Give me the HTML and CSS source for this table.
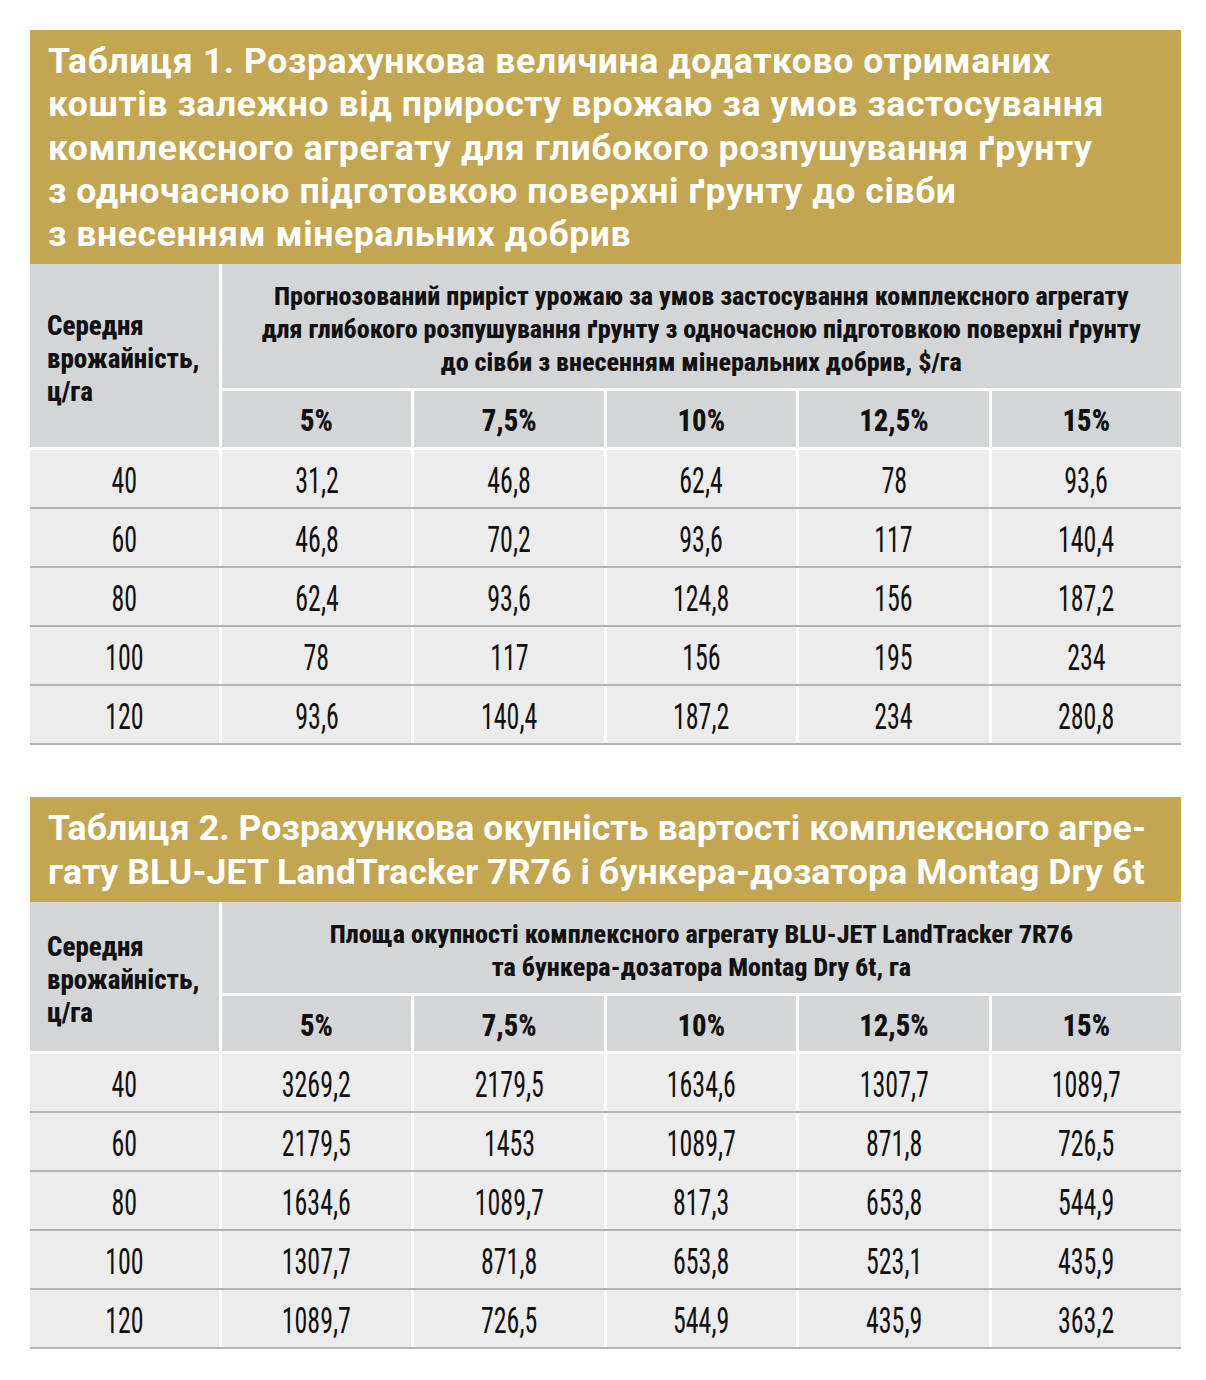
FILE: index.html
```html
<!DOCTYPE html>
<html lang="uk">
<head>
  <meta charset="UTF-8" />
  <title>Таблиці окупності</title>
  <link rel="stylesheet" href="styles.css">
</head>
<body>
  <section class="tbl">
    <h2 class="tbl-title">Таблиця 1. Розрахункова величина додатково отриманих<br>коштів залежно від приросту врожаю за умов застосування<br>комплексного агрегату для глибокого розпушування ґрунту<br>з одночасною підготовкою поверхні ґрунту до сівби<br>з внесенням мінеральних добрив</h2>
    <div class="tbl-head tall">
      <div class="h-side"><span>Середня<br>врожайність,<br>ц/га</span></div>
      <div class="h-main"><span>Прогнозований приріст урожаю за умов застосування комплексного агрегату<br>для глибокого розпушування ґрунту з одночасною підготовкою поверхні ґрунту<br>до сівби з внесенням мінеральних добрив, $/га</span></div>
      <div class="h-pct"><span>5%</span></div>
      <div class="h-pct"><span>7,5%</span></div>
      <div class="h-pct"><span>10%</span></div>
      <div class="h-pct"><span>12,5%</span></div>
      <div class="h-pct"><span>15%</span></div>
    </div>
    <div class="row"><div><span>40</span></div><div><span>31,2</span></div><div><span>46,8</span></div><div><span>62,4</span></div><div><span>78</span></div><div><span>93,6</span></div></div>
    <div class="row"><div><span>60</span></div><div><span>46,8</span></div><div><span>70,2</span></div><div><span>93,6</span></div><div><span>117</span></div><div><span>140,4</span></div></div>
    <div class="row"><div><span>80</span></div><div><span>62,4</span></div><div><span>93,6</span></div><div><span>124,8</span></div><div><span>156</span></div><div><span>187,2</span></div></div>
    <div class="row"><div><span>100</span></div><div><span>78</span></div><div><span>117</span></div><div><span>156</span></div><div><span>195</span></div><div><span>234</span></div></div>
    <div class="row"><div><span>120</span></div><div><span>93,6</span></div><div><span>140,4</span></div><div><span>187,2</span></div><div><span>234</span></div><div><span>280,8</span></div></div>
  </section>

  <section class="tbl">
    <h2 class="tbl-title tight">Таблиця 2. Розрахункова окупність вартості комплексного агре-<br>гату BLU-JET LandTracker 7R76 і бункера-дозатора Montag Dry 6t</h2>
    <div class="tbl-head">
      <div class="h-side"><span>Середня<br>врожайність,<br>ц/га</span></div>
      <div class="h-main"><span>Площа окупності комплексного агрегату BLU-JET LandTracker 7R76<br>та бункера-дозатора Montag Dry 6t, га</span></div>
      <div class="h-pct"><span>5%</span></div>
      <div class="h-pct"><span>7,5%</span></div>
      <div class="h-pct"><span>10%</span></div>
      <div class="h-pct"><span>12,5%</span></div>
      <div class="h-pct"><span>15%</span></div>
    </div>
    <div class="row"><div><span>40</span></div><div><span>3269,2</span></div><div><span>2179,5</span></div><div><span>1634,6</span></div><div><span>1307,7</span></div><div><span>1089,7</span></div></div>
    <div class="row"><div><span>60</span></div><div><span>2179,5</span></div><div><span>1453</span></div><div><span>1089,7</span></div><div><span>871,8</span></div><div><span>726,5</span></div></div>
    <div class="row"><div><span>80</span></div><div><span>1634,6</span></div><div><span>1089,7</span></div><div><span>817,3</span></div><div><span>653,8</span></div><div><span>544,9</span></div></div>
    <div class="row"><div><span>100</span></div><div><span>1307,7</span></div><div><span>871,8</span></div><div><span>653,8</span></div><div><span>523,1</span></div><div><span>435,9</span></div></div>
    <div class="row"><div><span>120</span></div><div><span>1089,7</span></div><div><span>726,5</span></div><div><span>544,9</span></div><div><span>435,9</span></div><div><span>363,2</span></div></div>
  </section>
</body>
</html>
```

FILE: styles.css
```css
:root {
  --gold: #c2a651;
  --head-bg: #d4d5d7;
  --cell-bg: #ececec;
  --rule: #b3b3b3;
  --ink: #111111;
  --cols: 189px repeat(5, 1fr);
}
* {
  box-sizing: border-box;
}
body {
  margin: 0;
  padding: 30px 25px 0 30px;
  background: #ffffff;
  color: var(--ink);
  font-family: "Roboto Condensed", "Liberation Sans Narrow", "DejaVu Sans Condensed", "Liberation Sans", sans-serif;
  font-stretch: condensed;
}
.tbl {
  width: 1151px;
  margin-bottom: 52px;
}
.tbl-title {
  margin: 0;
  background: var(--gold);
  color: #ffffff;
  font-family: Roboto, "Open Sans", sans-serif;
  font-stretch: normal;
  font-weight: 700;
  font-size: 35.6px;
  line-height: 43.3px;
  letter-spacing: 0.6px;
  padding: 10px 18px 8px 18px;
  white-space: nowrap;
}
.tbl-title.tight {
  letter-spacing: 0.1px;
}
.tbl-head {
  display: grid;
  grid-template-columns: var(--cols);
  grid-template-rows: 91px 55px;
  gap: 3px;
  background: #ffffff;
  border-bottom: 3px solid #ffffff;
}
.tbl-head.tall {
  grid-template-rows: 124px 56px;
}
.tbl-head > div {
  background: var(--head-bg);
  display: flex;
  align-items: center;
  justify-content: center;
  font-weight: 800;
  text-align: center;
}
.h-side {
  grid-row: span 2;
  justify-content: flex-start !important;
  text-align: left !important;
  padding: 8px 0 0 17px;
  font-size: 27px;
  line-height: 33px;
}
.h-main {
  grid-column: 2 / -1;
  font-size: 26.5px;
  line-height: 33px;
  padding-top: 5px;
  white-space: nowrap;
}
.h-main span {
  display: inline-block;
  transform: scaleX(0.985);
}
.h-pct {
  font-size: 30.5px;
  padding-top: 3px;
}
.h-pct span {
  display: inline-block;
  transform: scaleX(0.94);
}
.row {
  display: grid;
  grid-template-columns: var(--cols);
  column-gap: 3px;
  background: #ffffff;
  border-bottom: 2px solid var(--rule);
}
.row > div {
  background: var(--cell-bg);
  height: 57px;
  display: flex;
  align-items: center;
  justify-content: center;
  font-size: 37px;
  padding-top: 3px;
}
.row span {
  display: inline-block;
  transform: scaleX(0.7);
}
```
